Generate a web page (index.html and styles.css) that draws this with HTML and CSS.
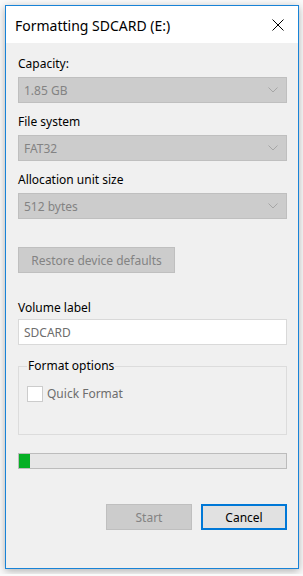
FILE: index.html
```html
<!DOCTYPE html>
<html lang="en">
<head>
  <meta charset="UTF-8">
  <meta name="viewport" content="width=device-width, initial-scale=1.0">
  <title>Formatting SDCARD (E:)</title>
  <link rel="stylesheet" href="styles.css">
</head>
<body>
<div class="window">
  <div class="titlebar">
    <span class="title">Formatting SDCARD (E:)</span>
    <svg class="close" width="12" height="12" viewBox="0 0 12 12">
      <path d="M0.5 0.5 L11.5 11.5 M11.5 0.5 L0.5 11.5" stroke="#000" stroke-width="1" fill="none"/>
    </svg>
  </div>

  <div class="content">
    <div class="label">Capacity:</div>
    <div class="combo">
      <span>1.85 GB</span>
      <svg width="10" height="6" viewBox="0 0 10 6"><path d="M0.5 0.5 L5 5 L9.5 0.5" stroke="#a6a6a6" fill="none"/></svg>
    </div>

    <div class="label">File system</div>
    <div class="combo">
      <span>FAT32</span>
      <svg width="10" height="6" viewBox="0 0 10 6"><path d="M0.5 0.5 L5 5 L9.5 0.5" stroke="#a6a6a6" fill="none"/></svg>
    </div>

    <div class="label">Allocation unit size</div>
    <div class="combo">
      <span>512 bytes</span>
      <svg width="10" height="6" viewBox="0 0 10 6"><path d="M0.5 0.5 L5 5 L9.5 0.5" stroke="#a6a6a6" fill="none"/></svg>
    </div>

    <button class="btn restore" disabled>Restore device defaults</button>

    <div class="label volume">Volume label</div>
    <div class="textbox">SDCARD</div>

    <fieldset class="group">
      <legend>Format options</legend>
      <label class="check">
        <span class="box"></span>
        <span>Quick Format</span>
      </label>
    </fieldset>

    <div class="progress"><div class="fill" style="width: 11px"></div></div>

    <div class="actions">
      <button class="btn start" disabled>Start</button>
      <button class="btn cancel">Cancel</button>
    </div>
  </div>
</div>
</body>
</html>
```

FILE: styles.css
```css
body {
  margin: 0;
  padding: 5px;
  background: #fafafa;
  font-family: "Noto Sans", "Open Sans", sans-serif;
  font-size: 12px;
  color: #000;
}

.window {
  width: 292px;
  height: 562px;
  border: 1px solid #1883d7;
  background: #f0f0f0;
  box-shadow: 0 2px 8px rgba(0, 0, 0, 0.3);
}

.titlebar {
  height: 37px;
  background: #fff;
  display: flex;
  align-items: center;
  justify-content: space-between;
  padding: 0 14px 0 9px;
}

.title {
  font-size: 14px;
  margin-top: 1px;
}

.close {
  margin-top: 1px;
}

.content {
  padding: 12px 11px 0 12px;
}

.label {
  line-height: 16px;
  margin: 1px 0 5px;
}

.combo {
  height: 24px;
  border: 1px solid #bfbfbf;
  background: #cccccc;
  color: #838383;
  display: flex;
  align-items: center;
  justify-content: space-between;
  padding: 0 8px 0 5px;
  margin-bottom: 11px;
}

.btn {
  font-family: inherit;
  font-size: 12px;
  height: 26px;
  border: 1px solid #adadad;
  background: #e1e1e1;
  color: #000;
  padding: 0;
}

.btn:disabled {
  background: #cccccc;
  border-color: #bfbfbf;
  color: #838383;
}

.restore {
  width: 157px;
  margin-top: 17px;
}

.volume {
  margin-top: 27px;
}

.textbox {
  height: 24px;
  border: 1px solid #d9d9d9;
  background: #fff;
  color: #6d6d6d;
  display: flex;
  align-items: center;
  padding-left: 5px;
  margin-top: -2px;
}

.group {
  margin: 13px 0 0;
  padding: 0 8px;
  height: 77px;
  box-sizing: border-box;
  border: 1px solid #dcdcdc;
}

.group legend {
  padding: 0 1px;
  line-height: 16px;
}

.check {
  display: flex;
  align-items: center;
  gap: 4px;
  color: #6d6d6d;
  margin-top: 11px;
}

.check .box {
  width: 14px;
  height: 14px;
  border: 1px solid #cccccc;
  background: #fff;
}

.progress {
  margin-top: 18px;
  height: 14px;
  border: 1px solid #bcbcbc;
  background: #e6e6e6;
}

.progress .fill {
  height: 100%;
  background: #06b025;
}

.actions {
  display: flex;
  justify-content: flex-end;
  gap: 9px;
  margin-top: 35px;
}

.start,
.cancel {
  width: 86px;
}

.cancel {
  border: 2px solid #0078d7;
}
```
